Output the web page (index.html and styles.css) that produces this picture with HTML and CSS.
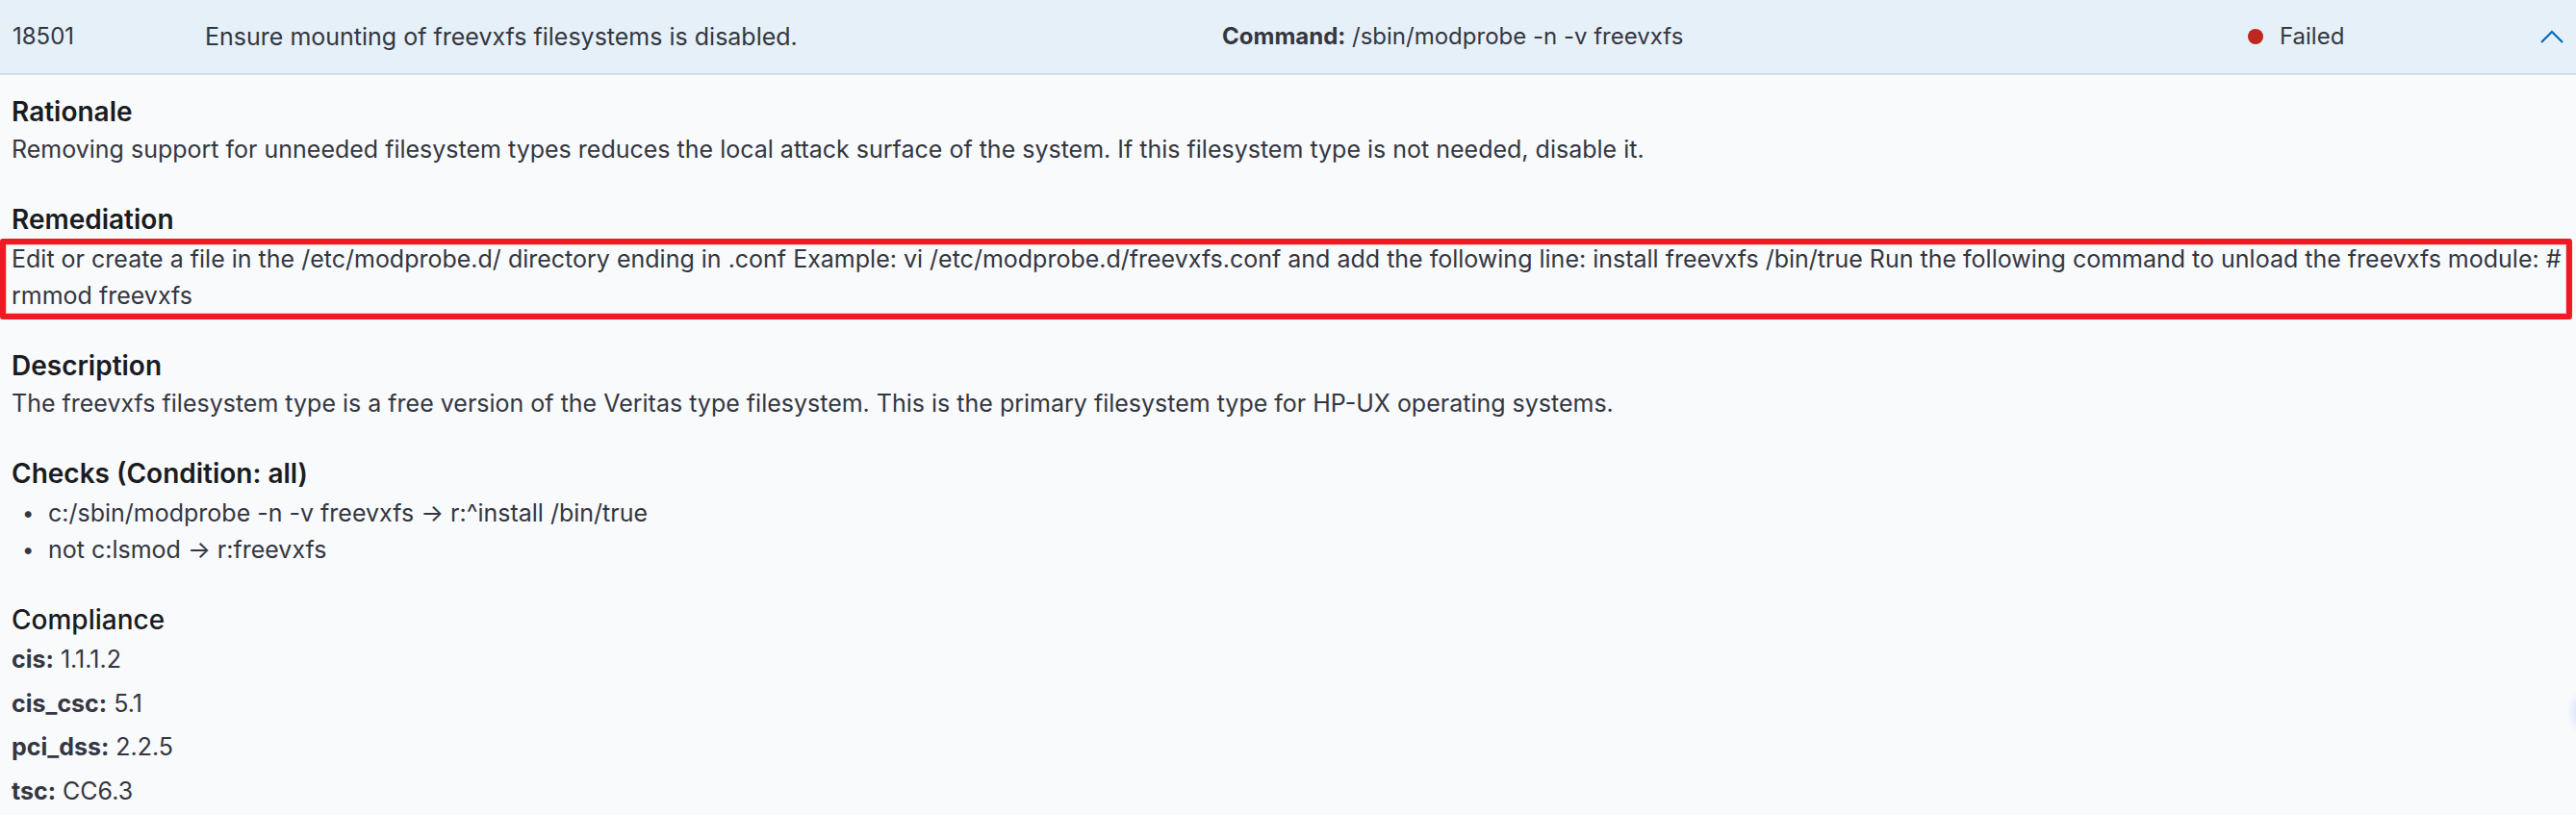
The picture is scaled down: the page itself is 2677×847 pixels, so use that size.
FILE: index.html
```html
<!DOCTYPE html>
<html lang="en">
<head>
<meta charset="utf-8">
<title>18501 - Ensure mounting of freevxfs filesystems is disabled.</title>
<link rel="stylesheet" href="styles.css">
</head>
<body>
<div class="row-head">
  <div class="cell cell-id">18501</div>
  <div class="cell cell-title">Ensure mounting of freevxfs filesystems is disabled.</div>
  <div class="cell cell-cmd"><strong>Command:</strong> /sbin/modprobe -n -v freevxfs</div>
  <div class="cell cell-status"><span class="dot"></span>Failed</div>
  <div class="cell cell-toggle">
    <svg class="chev" viewBox="0 0 24 14" width="24" height="14" aria-hidden="true"><path d="M1 13 L12 2 L23 13" fill="none" stroke="#006bb8" stroke-width="2.2"/></svg>
  </div>
</div>
<div class="details">
  <section class="sec">
    <h3 class="sec-title">Rationale</h3>
    <p class="sec-text">Removing support for unneeded filesystem types reduces the local attack surface of the system. If this filesystem type is not needed, disable it.</p>
  </section>
  <section class="sec">
    <h3 class="sec-title">Remediation</h3>
    <p class="sec-text annot">Edit or create a file in the /etc/modprobe.d/ directory ending in .conf Example: vi /etc/modprobe.d/freevxfs.conf and add the following line: install freevxfs /bin/true Run the following command to unload the freevxfs module: # rmmod freevxfs</p>
  </section>
  <section class="sec">
    <h3 class="sec-title">Description</h3>
    <p class="sec-text">The freevxfs filesystem type is a free version of the Veritas type filesystem. This is the primary filesystem type for HP-UX operating systems.</p>
  </section>
  <section class="sec">
    <h3 class="sec-title">Checks (Condition: all)</h3>
    <ul class="checks">
      <li>c:/sbin/modprobe -n -v freevxfs → r:^install /bin/true</li>
      <li>not c:lsmod → r:freevxfs</li>
    </ul>
  </section>
  <section class="sec">
    <h3 class="sec-title sec-title-light">Compliance</h3>
    <div class="comp">
      <p class="comp-row"><strong>cis:</strong> 1.1.1.2</p>
      <p class="comp-row"><strong>cis_csc:</strong> 5.1</p>
      <p class="comp-row"><strong>pci_dss:</strong> 2.2.5</p>
      <p class="comp-row"><strong>tsc:</strong> CC6.3</p>
    </div>
  </section>
</div>
<div class="float-blob"></div>
</body>
</html>
```
FILE: styles.css
```css
html, body {
  margin: 0;
  padding: 0;
}
body {
  background: #f9fafc;
  font-family: Inter, "Noto Sans", "Liberation Sans", sans-serif;
  font-size: 25px;
  line-height: 37.8px;
  color: #343741;
  overflow: hidden;
  position: relative;
  min-height: 847px;
}
.row-head {
  display: grid;
  grid-template-columns: 200px 1057px 1066px 1fr 24px;
  align-items: center;
  height: 76px;
  padding: 0 13px;
  background: #e6f0f8;
  border-bottom: 2px solid #d3dce8;
  font-size: 24px;
  line-height: 36px;
}
.cell {
  white-space: nowrap;
}
.cell-title {
  font-size: 25px;
}
.cell-cmd strong {
  font-weight: 700;
}
.cell-status {
  display: flex;
  align-items: center;
  gap: 17px;
}
.dot {
  width: 16px;
  height: 16px;
  border-radius: 50%;
  background: #bd271e;
}
.cell-toggle {
  display: flex;
  justify-content: center;
}
.chev {
  display: block;
}
.details {
  padding: 20px 0 0 12px;
}
.sec + .sec {
  margin-top: 35px;
}
.sec-title {
  margin: 0 0 1px 0;
  font-size: 28px;
  line-height: 37.8px;
  font-weight: 600;
  color: #1a1c21;
}
.sec-title-light {
  font-weight: 500;
}
.sec-text {
  margin: 0;
}
.annot {
  position: relative;
  margin-top: 4px;
}
.annot::after {
  content: "";
  position: absolute;
  top: -3px;
  left: -12px;
  right: 4px;
  bottom: -5px;
  border: 6px solid #ed1c24;
  border-radius: 3px;
  box-shadow: inset 0 0 0 1px #f7c9cb;
  pointer-events: none;
}
.checks {
  margin: 4px 0 0 0;
  padding-left: 11px;
  list-style: none;
}
.checks li {
  display: flex;
}
.checks li::before {
  content: "•";
  width: 27px;
  flex: none;
  font-size: 22px;
}
.comp {
  display: flex;
  flex-direction: column;
  gap: 8px;
  padding-top: 2px;
}
.comp-row {
  margin: 0;
}
.comp-row strong {
  font-weight: 700;
}
.float-blob {
  position: absolute;
  right: -30px;
  top: 715px;
  width: 40px;
  height: 50px;
  border-radius: 50%;
  background: radial-gradient(ellipse at center, rgba(160,180,245,0.55), rgba(200,210,250,0) 70%);
}
```
